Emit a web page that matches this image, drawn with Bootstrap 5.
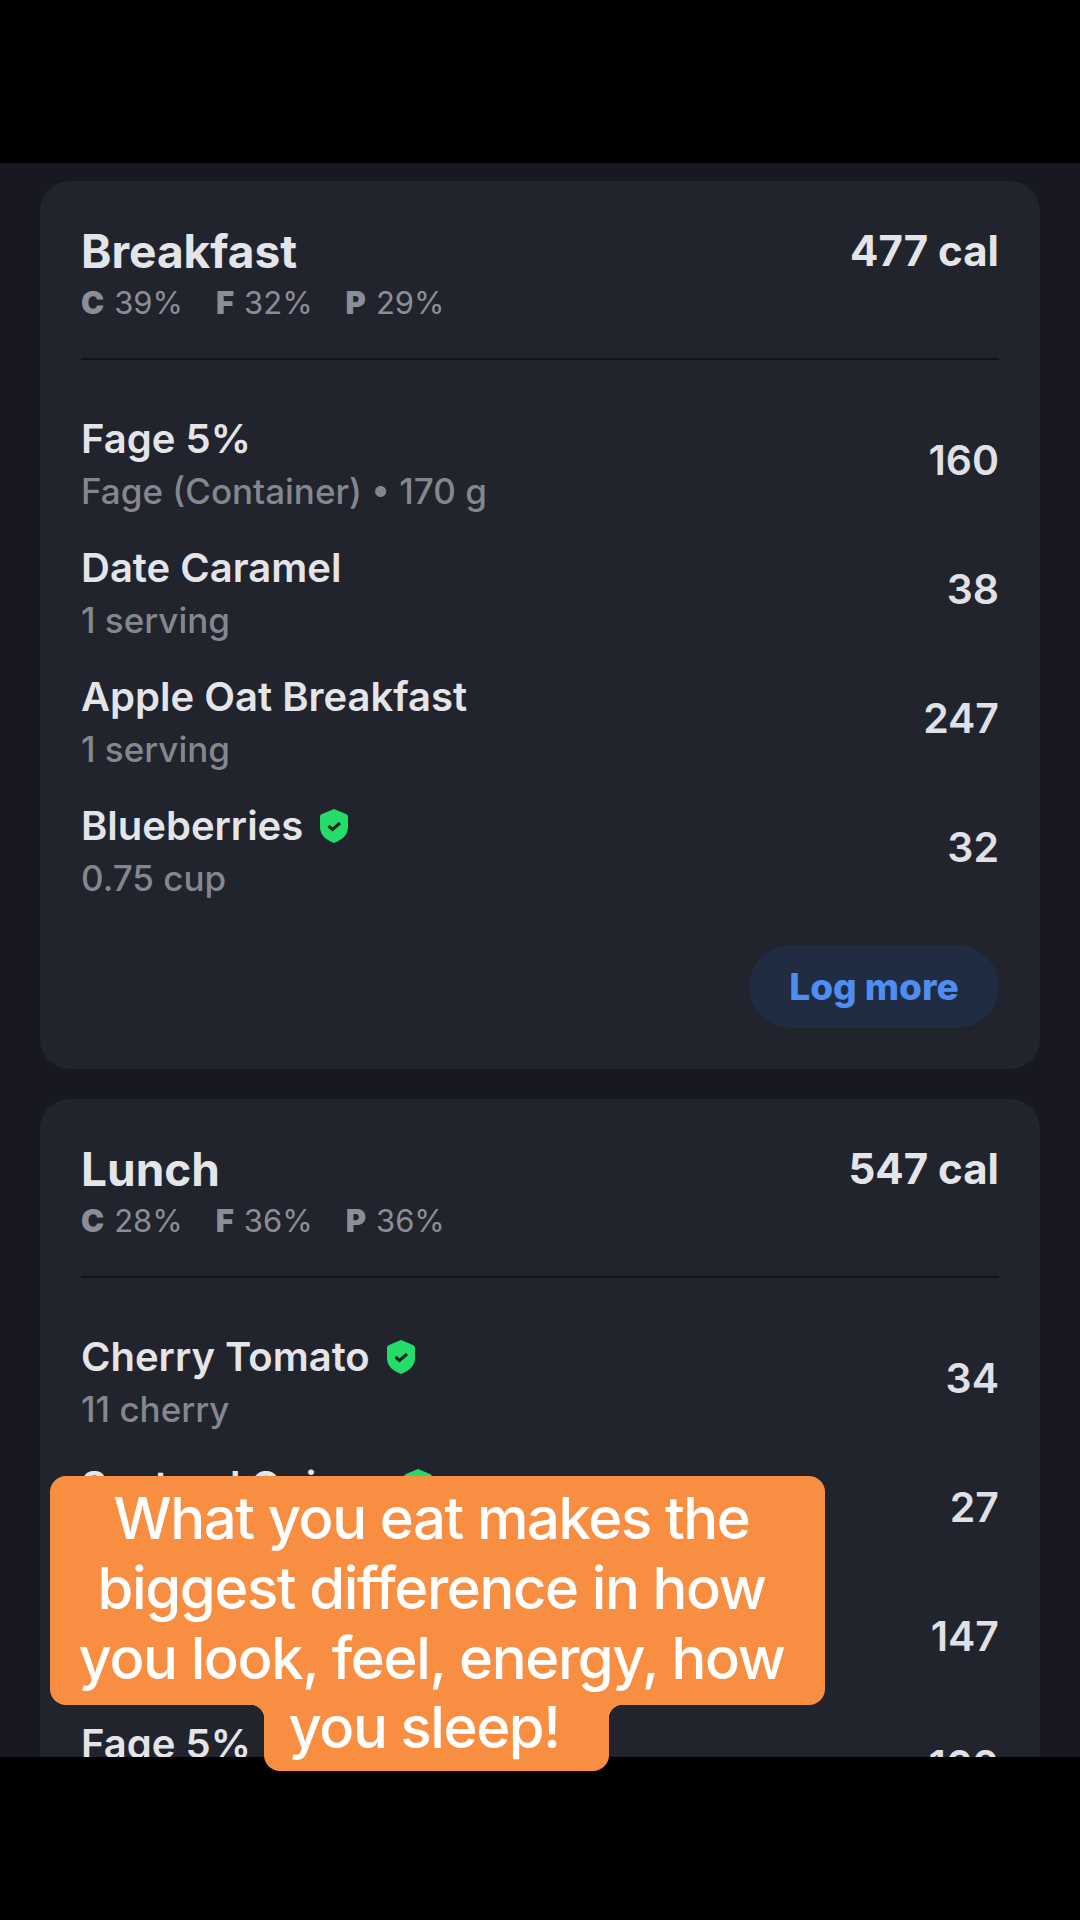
<!DOCTYPE html>
<html lang="en">
<head>
<meta charset="utf-8">
<title>Meal log</title>
<link rel="stylesheet" href="https://cdn.jsdelivr.net/npm/bootstrap@5.3.0/dist/css/bootstrap.min.css">
<style>
html, body { background: #000; margin: 0; height: 1920px; overflow: hidden; font-family: Inter, "Liberation Sans", sans-serif; }
.frame-bar { height: 163px; background: #000; }
.viewport { height: 1594px; background: #171821; overflow: hidden; padding: 18px 40px 0 40px; }
.meal-card { background: #22242d; border-radius: 30px; padding: 45px 41px 41px; margin-bottom: 30px; }
.meal-title { font-size: 46px; line-height: 50px; font-weight: 700; color: #e4e5e9; letter-spacing: 0; margin: 0; }
.meal-cal { font-size: 42px; line-height: 50px; font-weight: 700; color: #e4e5e9; }
.macros { font-size: 31px; line-height: 38px; color: #8c8e97; margin-top: 8px; }
.macros b { font-weight: 900; margin-right: 10px; }
.macro-item { margin-right: 33px; }
.meal-rule { height: 2px; background: #13141b; margin: 36px 0 39px; }
.food-row { height: 129px; }
.food-name { font-size: 40px; line-height: 48px; font-weight: 600; color: #e4e5e9; }
.food-sub { font-size: 35px; font-weight: 500; line-height: 42px; color: #85878f; margin-top: 7px; }
.food-cal { font-size: 41px; font-weight: 600; color: #e0e1e6; line-height: 44px; padding-bottom: 7px; }
.shield { width: 28px; height: 34px; margin-left: 17px; }
.log-wrap { margin-top: 30px; }
.log-btn { background: #202c41; color: #4f8df0; font-size: 37px; font-weight: 800; border: 0; border-radius: 42px; padding: 0; width: 250px; height: 83px; line-height: 83px; }
.caption { position: absolute; left: 50px; top: 1476px; width: 775px; color: #fff; font-size: 58px; letter-spacing: -1.4px; font-weight: 500; line-height: 70px; text-align: center; }
.cap-main { background: #f78e41; border-radius: 16px; padding: 7px 12px 0 0; height: 229px; }
.cap-tail { position: relative; background: #f78e41; width: 345px; height: 66px; border-radius: 0 0 16px 16px; margin-left: 214px; line-height: 44px; padding-right: 25px; }
.cap-tail::before, .cap-tail::after { content: ""; position: absolute; top: 0; width: 14px; height: 14px; }
.cap-tail::before { right: 100%; background: radial-gradient(circle at 0 100%, transparent 14px, #f78e41 14.5px); }
.cap-tail::after { left: 100%; background: radial-gradient(circle at 100% 100%, transparent 14px, #f78e41 14.5px); }
</style>
</head>
<body>
<div class="frame-bar"></div>
<div class="viewport">
  <section class="meal-card">
    <div class="d-flex justify-content-between align-items-start">
      <div>
        <h2 class="meal-title">Breakfast</h2>
        <div class="macros"><span class="macro-item"><b>C</b>39%</span><span class="macro-item"><b>F</b>32%</span><span class="macro-item"><b>P</b>29%</span></div>
      </div>
      <div class="meal-cal">477 cal</div>
    </div>
    <div class="meal-rule"></div>
    <div class="d-flex justify-content-between align-items-center food-row"><div><div class="food-name">Fage 5%</div><div class="food-sub">Fage (Container) • 170 g</div></div><div class="food-cal">160</div></div>
    <div class="d-flex justify-content-between align-items-center food-row"><div><div class="food-name">Date Caramel</div><div class="food-sub">1 serving</div></div><div class="food-cal">38</div></div>
    <div class="d-flex justify-content-between align-items-center food-row"><div><div class="food-name">Apple Oat Breakfast</div><div class="food-sub">1 serving</div></div><div class="food-cal">247</div></div>
    <div class="d-flex justify-content-between align-items-center food-row"><div><div class="food-name d-flex align-items-center">Blueberries<svg class="shield" viewBox="0 0 28 34"><path d="M14 0 26 5c1.300.5 2 1.500 2 3v10c0 8-6 13-14 16C6 31 0 26 0 18V8c0-1.500.7-2.500 2-3z" fill="#25dc6b"/><path d="M8.500 17l4 3.500L20 14" fill="none" stroke="#14261f" stroke-width="3"/></svg></div><div class="food-sub">0.75 cup</div></div><div class="food-cal">32</div></div>
    <div class="d-flex justify-content-end log-wrap"><button class="btn log-btn">Log more</button></div>
  </section>
  <section class="meal-card">
    <div class="d-flex justify-content-between align-items-start">
      <div>
        <h2 class="meal-title">Lunch</h2>
        <div class="macros"><span class="macro-item"><b>C</b>28%</span><span class="macro-item"><b>F</b>36%</span><span class="macro-item"><b>P</b>36%</span></div>
      </div>
      <div class="meal-cal">547 cal</div>
    </div>
    <div class="meal-rule"></div>
    <div class="d-flex justify-content-between align-items-center food-row"><div><div class="food-name d-flex align-items-center">Cherry Tomato<svg class="shield" viewBox="0 0 28 34"><path d="M14 0 26 5c1.300.5 2 1.500 2 3v10c0 8-6 13-14 16C6 31 0 26 0 18V8c0-1.500.7-2.500 2-3z" fill="#25dc6b"/><path d="M8.500 17l4 3.500L20 14" fill="none" stroke="#14261f" stroke-width="3"/></svg></div><div class="food-sub">11 cherry</div></div><div class="food-cal">34</div></div>
    <div class="d-flex justify-content-between align-items-center food-row"><div><div class="food-name d-flex align-items-center">Sauteed Onions<svg class="shield" viewBox="0 0 28 34"><path d="M14 0 26 5c1.300.5 2 1.500 2 3v10c0 8-6 13-14 16C6 31 0 26 0 18V8c0-1.500.7-2.500 2-3z" fill="#25dc6b"/><path d="M8.500 17l4 3.500L20 14" fill="none" stroke="#14261f" stroke-width="3"/></svg></div><div class="food-sub">1 serving</div></div><div class="food-cal">27</div></div>
    <div class="d-flex justify-content-between align-items-center food-row"><div><div class="food-name">Chicken Breast</div><div class="food-sub">1 serving</div></div><div class="food-cal">147</div></div>
    <div class="d-flex justify-content-between align-items-center food-row"><div><div class="food-name">Fage 5%</div><div class="food-sub">Fage (Container) • 170 g</div></div><div class="food-cal">160</div></div>
  </section>
</div>
<div class="frame-bar"></div>
<div class="caption">
  <div class="cap-main">What you eat makes the<br>biggest difference in how<br>you look, feel, energy, how</div>
  <div class="cap-tail">you sleep!</div>
</div>
<script src="https://cdn.jsdelivr.net/npm/bootstrap@5.3.0/dist/js/bootstrap.bundle.min.js"></script>
</body>
</html>
